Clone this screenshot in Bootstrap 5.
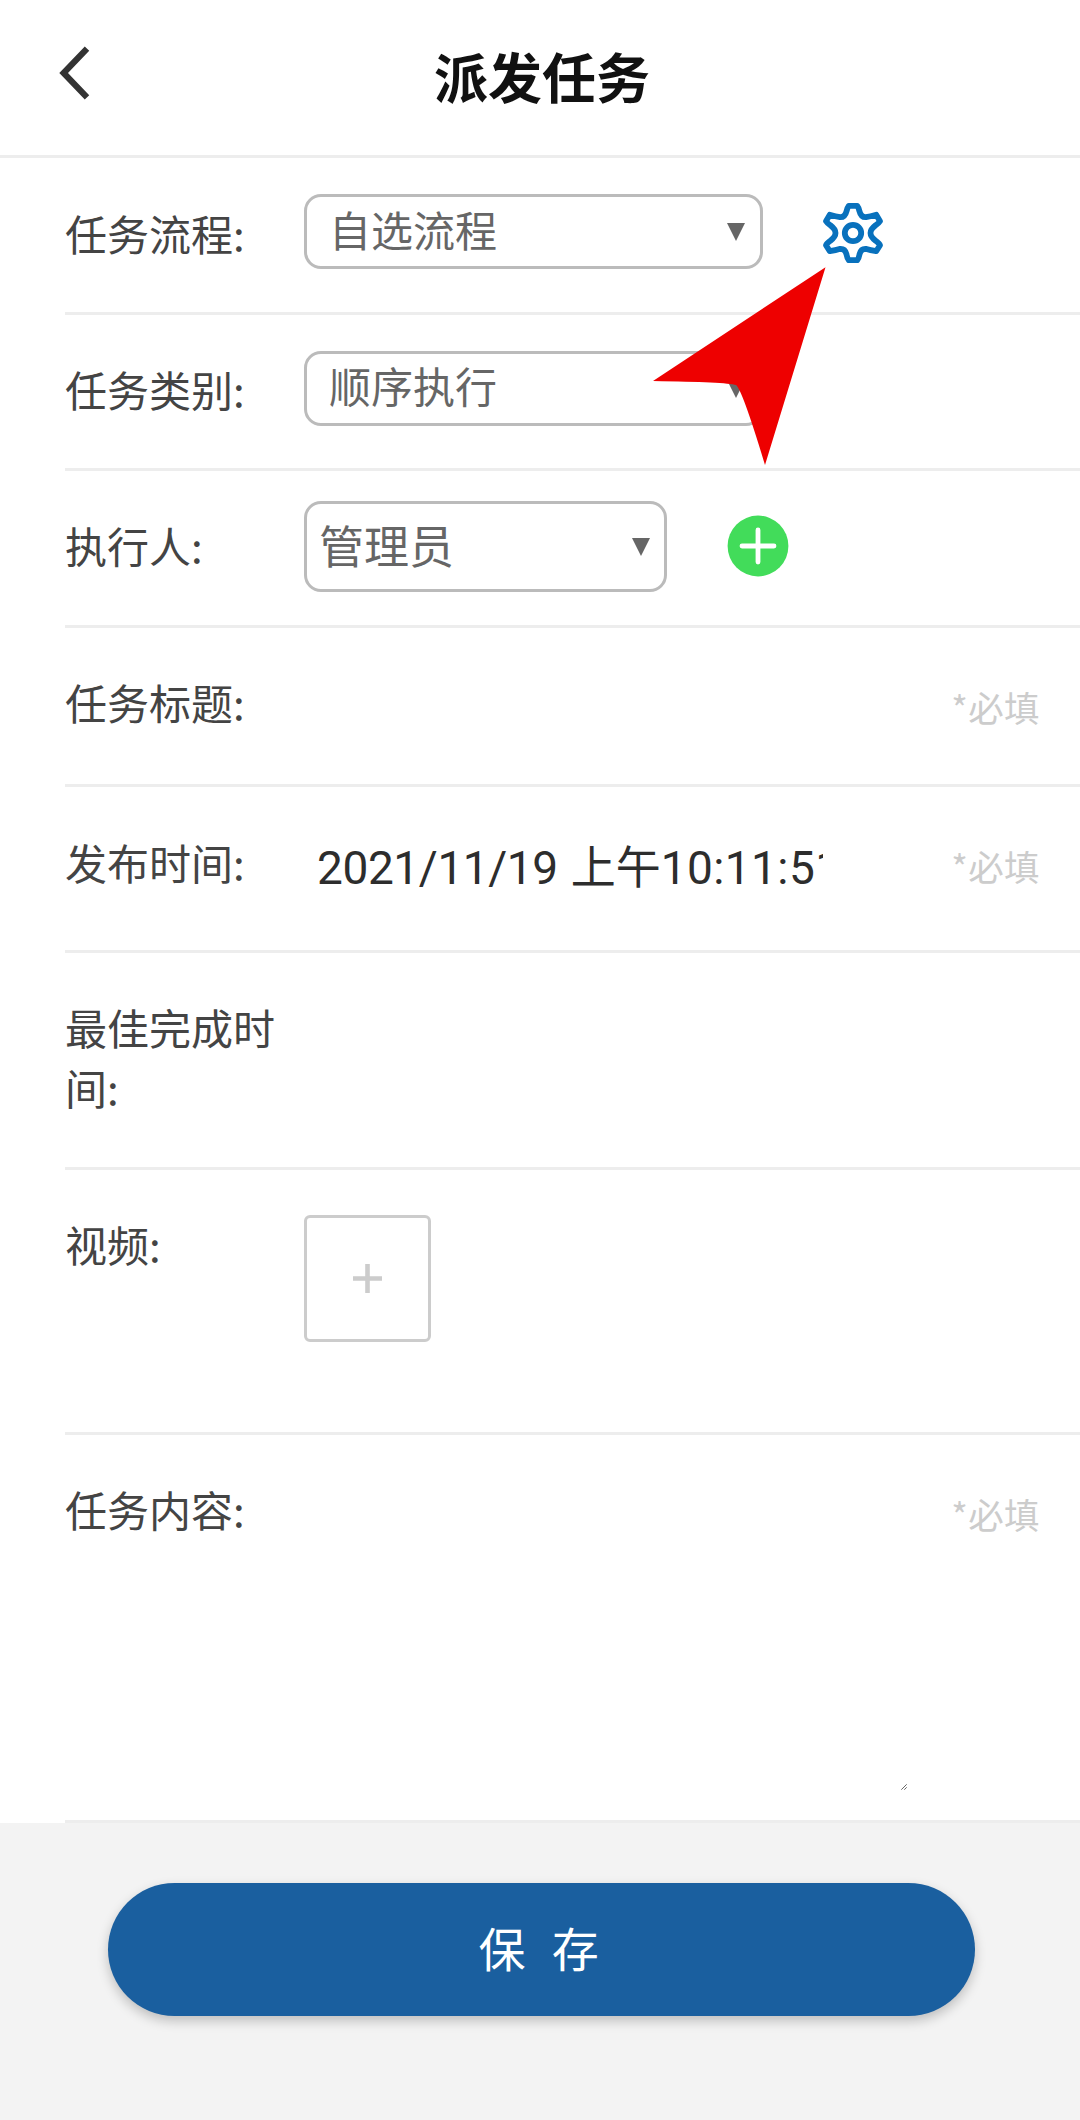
<!DOCTYPE html>
<html lang="zh-CN">
<head>
<meta charset="utf-8">
<meta name="viewport" content="width=device-width, initial-scale=1">
<title>派发任务</title>
<link href="https://cdn.jsdelivr.net/npm/bootstrap@5.3.0/dist/css/bootstrap.min.css" rel="stylesheet">
<style>
  body { font-family: "Noto Sans CJK SC", sans-serif; background: #f3f3f3; color: #444; overflow-x: hidden; }
  .app { width: 1080px; min-height: 2120px; }
  .topbar { height: 158px; border-bottom: 3px solid #ededed; padding: 0 57px 0 58px; }
  .topbar h1 { font-size: 54px; line-height: 60px; color: #111; padding: 0 0 3px 3px; }
  .topbar .side { width: 34px; }
  .back-icon { margin-bottom: 9px; }
  .form-rows { padding-left: 65px; }
  .form-row-item { border-bottom: 3px solid #ededed; height: 156px; }
  .h-first { height: 157px; }
  .h-first .field-label { padding-top: 45px; }
  .h-executor { height: 157px; }
  .h-title { height: 159px; }
  .h-time { height: 166px; }
  .h-best { height: 217px; }
  .h-video { height: 265px; }
  .h-content { height: 388px; }
  .field-label { width: 239px; padding: 44px 20px 0 0; font-size: 42px; line-height: 60px; }
  .h-time .field-label { padding-top: 45px; }
  .picker { width: 459px; height: 75px; margin-top: 36px; border: 3px solid #bbb; border-radius: 17px; padding: 0 15px 0 22px; font-size: 42px; line-height: 60px; color: #666; }
  .picker span { padding-bottom: 6px; }
  .picker-sm { width: 363px; height: 91px; margin-top: 30px; padding: 0 14px 0 12px; font-size: 45px; }
  .picker-second span { padding-bottom: 7px; }
  .picker-sm span { padding-bottom: 4px; }
  .gear { margin: 43px 0 0 58px; }
  .add { margin: 44px 0 0 60px; }
  .time-value { width: 519px; margin-top: 51px; padding-left: 13px; font-family: Roboto, "Noto Sans CJK SC", sans-serif; font-size: 46px; line-height: 60px; letter-spacing: -.4px; word-spacing: 2px; color: #2d2d2d; }
  .time-value .ampm { font-size: 45px; letter-spacing: 0; }
  .time-value .clock { letter-spacing: .4px; }
  .required { padding: 49px 40px 0 0; font-size: 35.5px; line-height: 60px; letter-spacing: .4px; color: #ccc; }
  .upload { width: 127px; height: 127px; margin-top: 45px; border: 3px solid #ccc; border-radius: 6px; }
  .grip { margin: 349px 0 0 597px; }
  .save-wrap { padding: 60px 105px 0 108px; }
  .btn-save { height: 133px; border: 0; border-radius: 67px; background: #1a5f9f; color: #fff; font-size: 47px; letter-spacing: 7.9px; box-shadow: 0 5px 12px rgba(0,0,0,.22); padding: 0 0 5px 2px; }
  .btn-save:hover { background: #174f86; color: #fff; }
  .pointer { left: 652px; top: 266px; }
</style>
</head>
<body>
<div class="app position-relative">
  <header class="topbar bg-white d-flex align-items-center justify-content-between">
    <svg class="side back-icon" width="34" height="56" viewBox="0 0 34 56" fill="none" stroke="#333" stroke-width="6.2"><path d="M29 3.6 L5.6 28 L29 52.4"/></svg>
    <h1 class="fw-bold m-0">派发任务</h1>
    <div class="side"></div>
  </header>

  <main class="form-rows bg-white">
    <div class="form-row-item h-first d-flex align-items-start">
      <div class="field-label">任务流程:</div>
      <div class="picker d-flex align-items-center justify-content-between"><span>自选流程</span><svg width="18" height="18" viewBox="0 0 18 18"><path fill="#666" d="M0 0H18L9 18Z"/></svg></div>
      <svg class="gear" width="64" height="64" viewBox="-32 -32 64 64" fill="none" stroke="#0871bd" stroke-width="5.8" stroke-linejoin="round">
        <path d="M-4.2 -27.2 H4.2 Q5.6 -25.5 6.4 -22 Q8 -15.5 13 -15.8 Q17 -16.5 23.2 -18.2 L27 -11.8 Q26 -10 22.5 -7.6 Q12.5 0 22.5 7.6 Q26.5 10.5 27 12.2 L23.2 18.2 Q17 17 13.5 15.9 Q8 15.3 6.6 21 Q5.8 25.5 4.2 27.2 H-4.2 Q-5.8 25.5 -6.6 21 Q-8 15.3 -13.5 15.9 Q-17 17 -23.2 18.2 L-27 12.2 Q-26.5 10.5 -22.5 7.6 Q-12.5 0 -22.5 -7.6 Q-26 -10 -27 -11.8 L-23.2 -18.2 Q-17 -16.5 -13 -15.8 Q-8 -15.5 -6.4 -22 Q-5.6 -25.5 -4.2 -27.2 Z"/>
        <circle r="8.2"/>
      </svg>
    </div>

    <div class="form-row-item d-flex align-items-start">
      <div class="field-label">任务类别:</div>
      <div class="picker picker-second d-flex align-items-center justify-content-between"><span>顺序执行</span><svg width="18" height="18" viewBox="0 0 18 18"><path fill="#666" d="M0 0H18L9 18Z"/></svg></div>
    </div>

    <div class="form-row-item h-executor d-flex align-items-start">
      <div class="field-label">执行人:</div>
      <div class="picker picker-sm d-flex align-items-center justify-content-between"><span>管理员</span><svg width="18" height="18" viewBox="0 0 18 18"><path fill="#666" d="M0 0H18L9 18Z"/></svg></div>
      <svg class="add" width="62" height="62" viewBox="0 0 62 62"><circle cx="31" cy="31" r="30.4" fill="#42dc5a"/><path d="M31 15V47M15 31H47" stroke="#fff" stroke-width="4.8" stroke-linecap="round"/></svg>
    </div>

    <div class="form-row-item h-title d-flex align-items-start">
      <div class="field-label">任务标题:</div>
      <div class="required ms-auto">*必填</div>
    </div>

    <div class="form-row-item h-time d-flex align-items-start">
      <div class="field-label">发布时间:</div>
      <div class="time-value overflow-hidden text-nowrap">2021/11/19 <span class="ampm">上午</span><span class="clock">10:11:51</span></div>
      <div class="required ms-auto">*必填</div>
    </div>

    <div class="form-row-item h-best d-flex align-items-start">
      <div class="field-label">最佳完成时间:</div>
    </div>

    <div class="form-row-item h-video d-flex align-items-start">
      <div class="field-label">视频:</div>
      <div class="upload d-flex align-items-center justify-content-center"><svg width="29" height="29" viewBox="0 0 29 29"><path d="M14.5 0V29M0 14.5H29" stroke="#ccc" stroke-width="4.6"/></svg></div>
    </div>

    <div class="form-row-item h-content d-flex align-items-start">
      <div class="field-label">任务内容:</div>
      <svg class="grip" width="6" height="6" viewBox="0 0 6 6" stroke="#555" stroke-width=".9"><path d="M.3 5.7L5.7 .3M3.3 5.7L5.7 3.3"/></svg>
      <div class="required ms-auto">*必填</div>
    </div>
  </main>

  <div class="save-wrap">
    <button type="button" class="btn btn-save w-100">保 存</button>
  </div>

  <svg class="pointer position-absolute" width="176" height="200" viewBox="652 266 176 200"><path fill="#e00" d="M825.5 267.2L653 381Q726 382 736 385Q742 389 765 465Z"/></svg>
</div>
<script src="https://cdn.jsdelivr.net/npm/bootstrap@5.3.0/dist/js/bootstrap.bundle.min.js"></script>
</body>
</html>
